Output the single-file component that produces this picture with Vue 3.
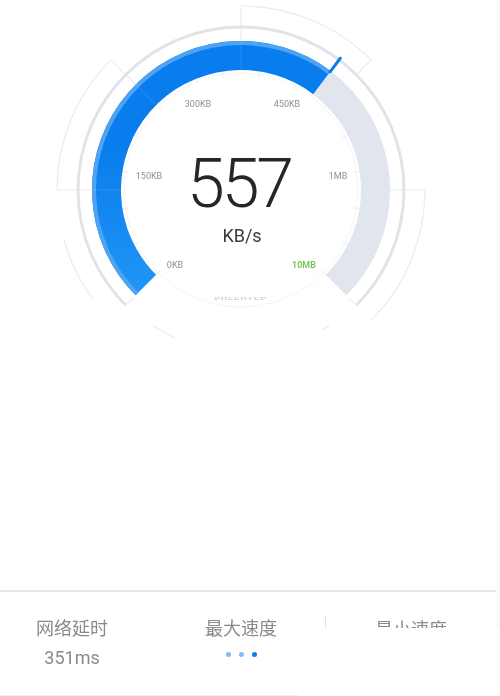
<script setup>
const cx = 241
const cy = 190
const pt = (r, a) => {
  const t = (a * Math.PI) / 180
  return [+(cx + r * Math.sin(t)).toFixed(2), +(cy - r * Math.cos(t)).toFixed(2)]
}
const arc = (r, a0, a1) => {
  const [x0, y0] = pt(r, a0)
  const [x1, y1] = pt(r, a1)
  const large = a1 - a0 > 180 ? 1 : 0
  return `M${x0} ${y0}A${r} ${r} 0 ${large} 1 ${x1} ${y1}`
}
const line = (r0, r1, a) => {
  const [x0, y0] = pt(r0, a)
  const [x1, y1] = pt(r1, a)
  return `M${x0} ${y0}L${x1} ${y1}`
}
const start = 225
const end = 495
const value = 397

const track = arc(134.5, value, end)
const band = arc(134.5, start, value)
const edge = arc(147, start, value)
const ring = arc(163, start, end)
const thinArcs = [
  arc(184, 0, 45),
  arc(184, 270, 315),
  arc(184, 90, 135),
  arc(184, 234, 254),
  arc(162, 204, 213),
  arc(162, 147, 150),
]
const thinLines = [
  line(183, 120, 0),
  line(184, 120, 270),
  line(184, 120, 90),
  line(184, 122, 315),
  line(184, 163, 45),
  line(163, 152, 225),
  line(163, 152, 135),
]
const tip = line(148, 165, 37)
const ticks = Array.from({ length: 16 }, (_, i) => line(113, 120, start + i * 18))
const labels = [
  { text: '0KB', x: 175, y: 268, green: false },
  { text: '150KB', x: 149, y: 179, green: false },
  { text: '300KB', x: 198, y: 107, green: false },
  { text: '450KB', x: 287, y: 107, green: false },
  { text: '1MB', x: 338, y: 179, green: false },
  { text: '10MB', x: 304, y: 268, green: true },
]
const stats = [
  { title: '网络延时', value: '351ms' },
  { title: '最大速度', dots: true },
  { title: '最小速度', clipped: true },
]
</script>

<template>
  <div class="page">
    <main class="main">
      <section class="gauge-area">
        <svg class="gauge" width="496" height="345" viewBox="0 0 496 345">
          <defs>
            <linearGradient id="bandFill" gradientUnits="userSpaceOnUse" x1="0" y1="296" x2="0" y2="150">
              <stop offset="0" stop-color="#2196f5" />
              <stop offset="1" stop-color="#0a7dee" />
            </linearGradient>
          </defs>
          <circle :cx="cx" :cy="cy" r="117" class="inner-ring" />
          <path v-for="(d, i) in ticks" :key="'t' + i" :d="d" class="tick" />
          <path v-for="(d, i) in thinLines" :key="'l' + i" :d="d" class="thin" />
          <path :d="track" class="track" />
          <path :d="band" class="band" />
          <path :d="edge" class="edge" />
          <path v-for="(d, i) in thinLines" :key="'o' + i" :d="d" class="veil" />
          <path :d="ring" class="ring" />
          <path v-for="(d, i) in thinArcs" :key="'a' + i" :d="d" class="thin" />
          <path :d="tip" class="tip" />
          <text
            v-for="l in labels"
            :key="l.text"
            :x="l.x"
            :y="l.y"
            class="scale"
            :class="{ green: l.green }"
            text-anchor="middle"
          >{{ l.text }}</text>
          <text x="239" y="207" class="speed" text-anchor="middle">557</text>
          <text x="242" y="242" class="unit" text-anchor="middle">KB/s</text>
        </svg>
        <div class="status"><span>SPEEDTEST</span></div>
      </section>
      <footer class="footer">
        <div class="stats">
          <div v-for="s in stats" :key="s.title" class="stat" :class="{ clipped: s.clipped }">
            <div class="title">{{ s.title }}</div>
            <div v-if="s.value" class="value">{{ s.value }}</div>
            <div v-if="s.dots" class="dots">
              <i class="dot light"></i>
              <i class="dot light"></i>
              <i class="dot active"></i>
            </div>
          </div>
        </div>
        <div class="foot-line"></div>
      </footer>
    </main>
    <aside class="strip"></aside>
  </div>
</template>

<style scoped>
.page {
  display: flex;
  align-items: flex-start;
  width: 500px;
  height: 696px;
  overflow: hidden;
  background: #fff;
  font-family: "Noto Sans CJK SC", "Noto Sans", sans-serif;
  filter: blur(0.5px);
}
.main {
  width: 496px;
  flex: none;
}
.strip {
  width: 4px;
  height: 627px;
  background: #fbfbfc;
}
.gauge-area {
  height: 592px;
  border-bottom: 2px solid #e6e6e6;
  box-sizing: border-box;
}
.gauge {
  display: block;
}
.status {
  width: 54px;
  height: 3px;
  margin: -48px 0 0 214px;
  overflow: hidden;
  position: relative;
}
.status span {
  position: absolute;
  top: 0;
  left: 0;
  font: 700 10px/8px "Roboto", sans-serif;
  letter-spacing: 0.6px;
  color: #d4d4d4;
}
.inner-ring {
  fill: none;
  stroke: #f4f5f8;
  stroke-width: 1;
}
.tick {
  stroke: #eceef2;
  stroke-width: 1;
}
.track {
  fill: none;
  stroke: #e1e6ee;
  stroke-width: 29;
}
.band {
  fill: none;
  stroke: url(#bandFill);
  stroke-width: 29;
}
.edge {
  fill: none;
  stroke: #4fa3f3;
  stroke-width: 4;
}
.ring {
  fill: none;
  stroke: #e1e3e7;
  stroke-width: 3;
}
.thin {
  fill: none;
  stroke: #eaebee;
  stroke-width: 1.2;
}
.veil {
  fill: none;
  stroke: #ffffff;
  stroke-opacity: 0.12;
  stroke-width: 1;
}
.tip {
  stroke: #0a7dee;
  stroke-width: 3;
  stroke-linecap: round;
}
.scale {
  font: 400 9px "Roboto", sans-serif;
  fill: #8f8f8f;
}
.scale.green {
  fill: #6cc04a;
  font-weight: 500;
}
.speed {
  font: 300 68px "Roboto", sans-serif;
  letter-spacing: -3px;
  fill: #262626;
}
.unit {
  font: 400 18px "Roboto", sans-serif;
  fill: #3a3a3a;
}
.footer {
  height: 104px;
  display: flex;
  flex-direction: column;
  justify-content: space-between;
}
.stats {
  display: grid;
  grid-template-columns: 144px 181px 171px;
}
.stat {
  height: 90px;
  padding-top: 23px;
  box-sizing: border-box;
  text-align: center;
  color: #8a8a8a;
}
.stat:nth-child(2) {
  padding-left: 13px;
}
.stat.clipped {
  height: 13px;
  margin-top: 23px;
  padding-top: 1px;
  overflow: hidden;
  border-left: 1px solid #e3e3e3;
}
.title {
  font-size: 18px;
  line-height: 24px;
}
.value {
  margin-top: 7px;
  font: 400 18px/24px "Roboto", sans-serif;
}
.dots {
  display: flex;
  justify-content: center;
  gap: 8px;
  margin-top: 13px;
}
.dot {
  width: 5px;
  height: 5px;
  border-radius: 50%;
}
.dot.light {
  background: #7fbcf2;
}
.dot.active {
  background: #0a7dee;
}
.foot-line {
  width: 298px;
  height: 1px;
  background: #eeeeee;
}
</style>
